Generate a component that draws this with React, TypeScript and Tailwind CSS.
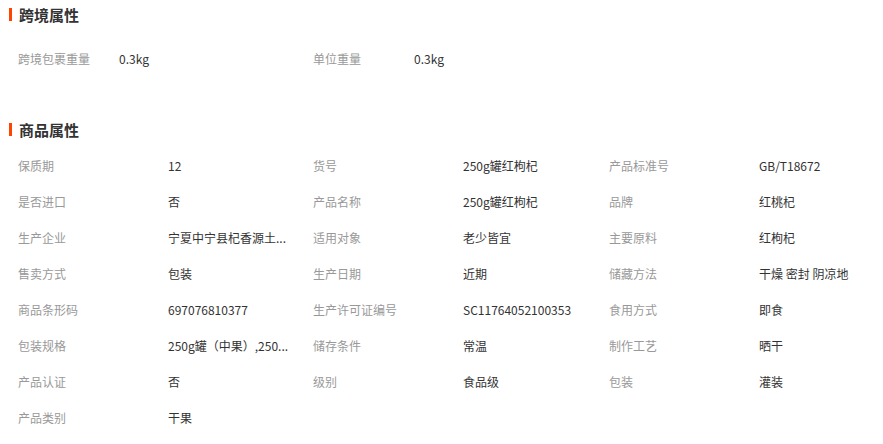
const font = { fontFamily: '"Microsoft YaHei", "Noto Sans CJK SC", "Liberation Sans", sans-serif' };

type Pair = [string, string];

const crossBorder: Pair[] = [
  ['跨境包裹重量', '0.3kg'],
  ['单位重量', '0.3kg'],
];

// values are cut the way the page shows them
const goods: Pair[] = [
  ['保质期', '12'],
  ['货号', '250g罐红枸杞'],
  ['产品标准号', 'GB/T18672'],
  ['是否进口', '否'],
  ['产品名称', '250g罐红枸杞'],
  ['品牌', '红桃杞'],
  ['生产企业', '宁夏中宁县杞香源土...'],
  ['适用对象', '老少皆宜'],
  ['主要原料', '红枸杞'],
  ['售卖方式', '包装'],
  ['生产日期', '近期'],
  ['储藏方法', '干燥 密封 阴凉地'],
  ['商品条形码', '697076810377'],
  ['生产许可证编号', 'SC11764052100353'],
  ['食用方式', '即食'],
  ['包装规格', '250g罐（中果）,250...'],
  ['储存条件', '常温'],
  ['制作工艺', '晒干'],
  ['产品认证', '否'],
  ['级别', '食品级'],
  ['包装', '灌装'],
  ['产品类别', '干果'],
];

function SectionTitle({ title }: { title: string }) {
  return (
    <div className="flex h-[32px] items-center pb-[3px]">
      <span className="ml-[9px] h-[13px] w-[3px] bg-[#ff4400]" />
      <h2 className="ml-[7px] text-[15px] font-bold leading-none text-[#333]">{title}</h2>
    </div>
  );
}

export default function App() {
  return (
    <div className="h-[444px] w-[883px] overflow-hidden bg-white text-[12px]" style={font}>
      <SectionTitle title="跨境属性" />
      <div className="grid grid-cols-[295px_296px_1fr] pl-[18px] pt-[9px]">
        {crossBorder.map(([k, v]) => (
          <div key={k} className="flex h-[36px] items-center">
            <span className="w-[101px] shrink-0 text-[#999]">{k}</span>
            <span className="text-[#333]">{v}</span>
          </div>
        ))}
      </div>

      <div className="mt-[38px]">
        <SectionTitle title="商品属性" />
        <div className="grid grid-cols-[295px_296px_1fr] pl-[18px] pt-[1px]">
          {goods.map(([k, v]) => (
            <div key={k} className="flex h-[36px] items-center">
              <span className="w-[150px] shrink-0 text-[#999]">{k}</span>
              <span className="whitespace-nowrap text-[#333]">{v}</span>
            </div>
          ))}
        </div>
      </div>
    </div>
  );
}
